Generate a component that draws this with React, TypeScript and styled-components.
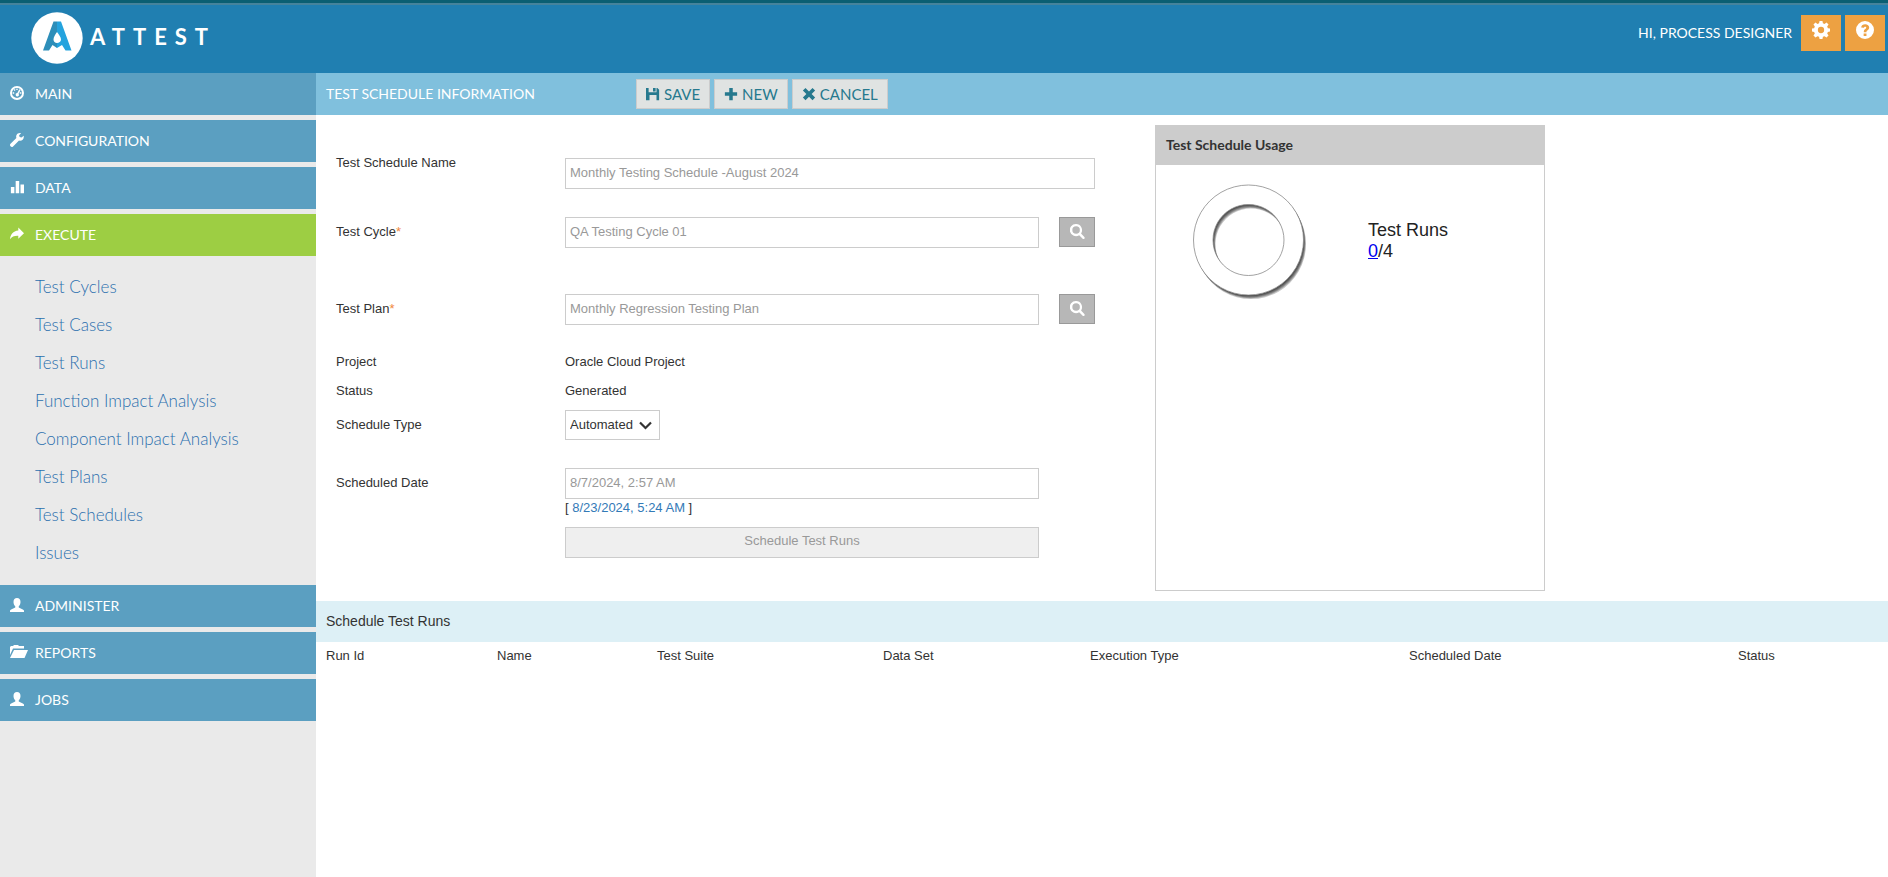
import React from "react";
import styled, { createGlobalStyle } from "styled-components";

const brandFont = `Lato, "Open Sans", sans-serif`;
const bodyFont = `"Liberation Sans", Arial, sans-serif`;

const Global = createGlobalStyle`
  *, *::before, *::after { box-sizing: border-box; }
  body { margin: 0; background: #fff; color: #333; font: 13px/18px ${bodyFont}; }
  button, input, select { font: inherit; margin: 0; border-radius: 0; }
  a { text-decoration: none; }
`;

const Page = styled.div`
  display: flex;
  flex-direction: column;
  min-height: 100vh;
`;

const Header = styled.header`
  display: flex;
  align-items: flex-start;
  justify-content: space-between;
  height: 73px;
  padding: 7px 3px 0 31px;
  background: #207fb1;
  border-top: 3px solid #0a5f73;
  box-shadow: inset 0 2px 0 #45839c;
`;

const Brand = styled.a`
  display: flex;
  align-items: flex-start;
  gap: 7px;
  padding-top: 2px;
  color: #fff;
  font: 700 22px/50px ${brandFont};
  letter-spacing: 8px;
`;

const UserArea = styled.div`
  display: flex;
  gap: 4px;
  padding-top: 5px;
`;

const Greeting = styled.span`
  margin-right: 5px;
  color: #fff;
  font: 14px/35px ${brandFont};
`;

const IconButton = styled.button`
  display: flex;
  justify-content: center;
  align-items: flex-start;
  width: 40px;
  height: 36px;
  padding: 6px 0 0;
  border: 0;
  background: #eda142;
  color: #fff;
`;

const Columns = styled.div`
  display: flex;
  flex: 1;
`;

const Sidebar = styled.nav`
  flex: 0 0 316px;
  display: flex;
  flex-direction: column;
  gap: 5px;
  background: #eaeaea;
`;

const SectionLink = styled.a<{ $active?: boolean }>`
  display: flex;
  align-items: center;
  gap: 7px;
  height: 42px;
  padding: 0 10px;
  background: ${(p) => (p.$active ? "#9dce43" : "#5b9fc1")};
  color: #fff;
  font: 14px/42px ${brandFont};
  svg { flex: none; }
`;

const IconSlot = styled.span`
  display: flex;
  width: 18px;
  padding-bottom: 2px;
`;

const SubMenu = styled.ul`
  margin: 0;
  padding: 7px 0 8px;
  list-style: none;
`;

const SubLink = styled.a`
  display: block;
  padding-left: 35px;
  color: #2a6fae;
  font: 300 17px/38px ${brandFont};
`;

const Main = styled.main`
  flex: 1;
  min-width: 0;
`;

const TitleBar = styled.div`
  display: flex;
  align-items: center;
  height: 42px;
  padding-left: 10px;
  background: #80c0dd;
`;

const Title = styled.h1`
  flex: 0 1 310px;
  margin: 0;
  color: #fff;
  font: 14px/42px ${brandFont};
`;

const Toolbar = styled.div`
  display: flex;
  gap: 4px;
`;

const ToolButton = styled.button`
  display: flex;
  align-items: center;
  gap: 4px;
  height: 30px;
  padding: 0 9px;
  border: 1px solid #ccc;
  background: #e0e3e2;
  color: #26798e;
  && { font: 15px/28px ${brandFont}; }
`;

const Content = styled.div`
  display: grid;
  grid-template-columns: 839fr 390fr 343fr;
  padding: 10px 0;
`;

const Form = styled.form`
  display: grid;
  grid-template-columns: 229fr 474fr 56fr;
  align-content: start;
  margin: 0;
  padding: 29px 60px 0 20px;
`;

const Row = styled.div<{ $height: number }>`
  display: grid;
  grid-column: 1 / -1;
  grid-template-columns: subgrid;
  align-items: start;
  height: ${(p) => p.$height}px;
`;

const Label = styled.label<{ $top?: number }>`
  padding-top: ${(p) => p.$top ?? 6}px;
`;

const Required = styled.span`
  color: #f0883e;
`;

const Input = styled.input<{ $wide?: boolean }>`
  grid-column: ${(p) => (p.$wide ? "2 / 4" : "2")};
  width: 100%;
  height: 31px;
  margin-top: ${(p) => (p.$wide ? 4 : 0)}px;
  padding: 0 4px 3px;
  border: 1px solid #ccc;
  background: #fff;
  color: #999;
`;

const SearchButton = styled.button`
  justify-self: end;
  display: flex;
  justify-content: center;
  width: 36px;
  height: 30px;
  padding: 6px 0 0;
  border: 1px solid #999;
  background: #b7b7b7;
  color: #fff;
`;

const SelectWrap = styled.div`
  position: relative;
  justify-self: start;
  svg { position: absolute; right: 8px; top: 11px; pointer-events: none; }
`;

const Select = styled.select`
  appearance: none;
  display: block;
  width: 95px;
  height: 30px;
  padding: 0 4px;
  border: 1px solid #ccc;
  background: #fff;
  color: #333;
`;

const DateLink = styled.a`
  color: #337ab7;
`;

const ScheduleButton = styled.button`
  grid-column: 2;
  height: 31px;
  padding: 0 0 3px;
  border: 1px solid #ccc;
  background: #efefef;
  color: #999;
`;

const Usage = styled.section`
  height: 466px;
  border: 1px solid #ccc;
`;

const UsageTitle = styled.h2`
  margin: 0;
  padding-left: 10px;
  background: #ccc;
  font: 700 14px/38px ${brandFont};
  border-bottom: 1px solid #ccc;
`;

const UsageBody = styled.div`
  display: flex;
  gap: 60px;
  padding: 14px 32px;
`;

const UsageText = styled.div`
  padding-top: 41px;
  color: #222;
  font-size: 18px;
  line-height: 21px;
  a { color: #00e; text-decoration: underline; }
`;

const RunsTitle = styled.h2`
  margin: 0;
  padding-left: 10px;
  background: #ddf0f6;
  font: 14px/41px ${bodyFont};
`;

const RunsTable = styled.table`
  width: 100%;
  table-layout: fixed;
  border-collapse: collapse;
  th { padding: 5px 0 4px 10px; font-weight: 400; text-align: left; }
`;

const LogoMark = () => (
  <svg width="52" height="52" viewBox="0 0 52 52" aria-hidden="true">
    <circle cx="26" cy="26" r="25.7" fill="#fff" />
    <path d="M22.500 9.500H26V20C24 23 22.500 25 22.500 27.500C22.500 29.500 24 31 26 31V36L21.500 33L18 38.500H12Z" fill="#2d8eb9" />
    <path d="M26 9.500H30L40.500 38.500H34.500L31 33L26 36V31C28 31 30 29.500 30 27.500C30 25 28 23 26 20Z" fill="#24a3de" />
  </svg>
);

const glyphs = {
  dashboard: "M8 0a8 8 0 1 0 0 16A8 8 0 0 0 8 0zm0 2.200a5.800 5.800 0 1 1 0 11.600A5.800 5.800 0 0 1 8 2.200zM7.200 3h1.600v1.700H7.200zM4.200 4.500l1.200-1 1 1.200-1.200 1zM3 7.200h1.800v1.600H3zM11.200 7.200H13v1.600h-1.800zM10.600 3.600l1.500.9-2.300 4.300a1.900 1.900 0 1 1-1.400-.7z",
  wrench: "M15.700 3.200l-2.600 2-2.100-.6-.6-2.100L12.600.3C10.600-.4 8.500.4 7.500 2.200c-.6 1.200-.6 2.300-.2 3.400L.6 12.300c-.8.8-.8 2 0 2.900.9.9 2.100.9 2.900.1l6.800-6.700c2.600.9 6-.9 5.400-5.400z",
  chart: "M1 8h4v7H1zM6.500 1h4v14h-4zM12 5h4v10h-4z",
  share: "M16 7L9.500 .5v3.500C3.500 4.500 .5 8.500 0 14c2-3 5-4.200 9.500-4v3.500z",
  user: "M4 4.500C4 1.700 5.500 0 8 0s4 1.700 4 4.500c0 2-.8 4-2 5v1.300c2 1.200 5.500 1.900 6 3.500V16H0v-1.700c.5-1.600 4-2.300 6-3.500V9.500c-1.200-1-2-3-2-5z",
  save: "M0 1h3v5h9V1h1l2 2v12h-3V9H4v6H0zM8 1h3v4H8z",
  plus: "M6 1h4v5h5v4h-5v5H6v-5H1V6h5z",
  remove: "M4 1l4 4 4-4 3 3-4 4 4 4-3 3-4-4-4 4-3-3 4-4-4-4z",
  search: "M6.500 0a6.500 6.500 0 1 0 3.300 12l3.700 3.700c.6.500 1.300.4 1.800-.1s.5-1.300 0-1.800L11.800 10A6.500 6.500 0 0 0 6.500 0zm0 2.500a4 4 0 1 1 0 8 4 4 0 0 1 0-8z",
  gear: "M6.700 0h2.600l.4 2 1.400.6L12.900 1.400l1.800 1.800-1.200 1.700.6 1.500 1.900.3v2.600l-1.900.4-.6 1.400 1.200 1.800-1.800 1.800-1.800-1.200-1.400.6-.4 1.900H6.700l-.4-1.900-1.400-.6-1.800 1.200-1.800-1.800 1.200-1.800-.6-1.400L0 9.300V6.700l1.900-.3.6-1.500-1.200-1.700 1.800-1.800 1.800 1.200L6.300 2zM8 5.200a2.800 2.800 0 1 0 0 5.600 2.800 2.800 0 0 0 0-5.600z",
  help: "M8 0a8 8 0 1 0 0 16A8 8 0 0 0 8 0zm-1.200 11h2.500v2.300H6.800zM4.600 5.800C4.800 3.700 6.200 2.800 8.200 2.800c2.100 0 3.500 1.200 3.500 3 0 1.400-.8 2.100-1.600 2.700-.6.400-.8.700-.8 1.500H6.900c0-1.500.4-2.200 1.400-2.900.6-.4.800-.7.800-1.100 0-.5-.3-.9-.9-.9-.7 0-1 .4-1.100 1z",
};

type GlyphName = keyof typeof glyphs | "folder";

const Glyph = ({ name, size = 14 }: { name: GlyphName; size?: number }) =>
  name === "folder" ? (
    <svg width="18" height="14" viewBox="0 0 18 14" fill="currentColor" aria-hidden="true">
      <path d="M0 10V2l1-1h2l1-1h4l1 1h5v2.500H3L0 10zM4 5h14l-3.500 8H0z" />
    </svg>
  ) : (
    <svg width={size} height={size} viewBox="0 0 16 16" fill="currentColor" fillRule="evenodd" aria-hidden="true">
      <path d={glyphs[name]} />
    </svg>
  );

const ringPath = "M60.5 6a55 55 0 1 0 .01 0zM60.5 25.500a35.500 35.500 0 1 1-.01 0z";

const Ring = () => (
  <svg width="120" height="124" viewBox="0 0 120 124" fillRule="evenodd" role="img" aria-label="Test runs chart">
    {[1, 2, 3, 4, 5].map((step) => (
      <path key={step} d={ringPath} fill="#000" fillOpacity="0.22" transform={`translate(${step * 0.5} ${step * 0.8})`} />
    ))}
    <path d={ringPath} fill="#fff" stroke="#8a8a8a" strokeWidth="0.8" />
  </svg>
);

const before: [string, GlyphName][] = [["MAIN", "dashboard"], ["CONFIGURATION", "wrench"], ["DATA", "chart"]];
const after: [string, GlyphName][] = [["ADMINISTER", "user"], ["REPORTS", "folder"], ["JOBS", "user"]];
const executeLinks = [
  "Test Cycles", "Test Cases", "Test Runs", "Function Impact Analysis",
  "Component Impact Analysis", "Test Plans", "Test Schedules", "Issues",
];
const runColumns: [string, number][] = [
  ["Run Id", 171], ["Name", 160], ["Test Suite", 226], ["Data Set", 207],
  ["Execution Type", 319], ["Scheduled Date", 329], ["Status", 160],
];
const runColumnsTotal = runColumns.reduce((sum, [, w]) => sum + w, 0);

const Section = ({ label, icon, active }: { label: string; icon: GlyphName; active?: boolean }) => (
  <SectionLink href="#" $active={active}>
    <IconSlot><Glyph name={icon} /></IconSlot>
    {label}
  </SectionLink>
);

export default function App() {
  return (
    <Page>
      <Global />
      <Header>
        <Brand href="#">
          <LogoMark />
          <span>ATTEST</span>
        </Brand>
        <UserArea>
          <Greeting>HI, PROCESS DESIGNER</Greeting>
          <IconButton aria-label="Settings"><Glyph name="gear" size={18} /></IconButton>
          <IconButton aria-label="Help"><Glyph name="help" size={18} /></IconButton>
        </UserArea>
      </Header>
      <Columns>
        <Sidebar>
          {before.map(([label, icon]) => <Section key={label} label={label} icon={icon} />)}
          <Section label="EXECUTE" icon="share" active />
          <SubMenu>
            {executeLinks.map((label) => <li key={label}><SubLink href="#">{label}</SubLink></li>)}
          </SubMenu>
          {after.map(([label, icon]) => <Section key={label} label={label} icon={icon} />)}
        </Sidebar>
        <Main>
          <TitleBar>
            <Title>TEST SCHEDULE INFORMATION</Title>
            <Toolbar>
              <ToolButton><Glyph name="save" />SAVE</ToolButton>
              <ToolButton><Glyph name="plus" />NEW</ToolButton>
              <ToolButton><Glyph name="remove" />CANCEL</ToolButton>
            </Toolbar>
          </TitleBar>
          <Content>
            <Form onSubmit={(e) => e.preventDefault()}>
              <Row $height={63}>
                <Label htmlFor="name" $top={0}>Test Schedule Name</Label>
                <Input id="name" $wide readOnly value="Monthly Testing Schedule -August 2024" />
              </Row>
              <Row $height={77}>
                <Label htmlFor="cycle">Test Cycle<Required>*</Required></Label>
                <Input id="cycle" readOnly value="QA Testing Cycle 01" />
                <SearchButton type="button" aria-label="Find test cycle"><Glyph name="search" size={15} /></SearchButton>
              </Row>
              <Row $height={59}>
                <Label htmlFor="plan">Test Plan<Required>*</Required></Label>
                <Input id="plan" readOnly value="Monthly Regression Testing Plan" />
                <SearchButton type="button" aria-label="Find test plan"><Glyph name="search" size={15} /></SearchButton>
              </Row>
              <Row $height={29}><span>Project</span><span>Oracle Cloud Project</span></Row>
              <Row $height={28}><span>Status</span><span>Generated</span></Row>
              <Row $height={58}>
                <Label htmlFor="type">Schedule Type</Label>
                <SelectWrap>
                  <Select id="type" defaultValue="Automated"><option>Automated</option></Select>
                  <svg width="13" height="9" viewBox="0 0 13 9" fill="none" stroke="#333" strokeWidth="2.200" aria-hidden="true">
                    <path d="M1 1.500L6.500 7L12 1.500" />
                  </svg>
                </SelectWrap>
              </Row>
              <Row $height={31}>
                <Label htmlFor="date">Scheduled Date</Label>
                <Input id="date" readOnly value="8/7/2024, 2:57 AM" />
              </Row>
              <Row $height={28}>
                <span />
                <span>[ <DateLink href="#">8/23/2024, 5:24 AM</DateLink> ]</span>
              </Row>
              <ScheduleButton type="button">Schedule Test Runs</ScheduleButton>
            </Form>
            <Usage>
              <UsageTitle>Test Schedule Usage</UsageTitle>
              <UsageBody>
                <Ring />
                <UsageText>Test Runs<br /><a href="#">0</a>/4</UsageText>
              </UsageBody>
            </Usage>
          </Content>
          <RunsTitle>Schedule Test Runs</RunsTitle>
          <RunsTable>
            <colgroup>
              {runColumns.map(([label, w]) => <col key={label} style={{ width: `${(w / runColumnsTotal) * 100}%` }} />)}
            </colgroup>
            <thead>
              <tr>{runColumns.map(([label]) => <th key={label} scope="col">{label}</th>)}</tr>
            </thead>
          </RunsTable>
        </Main>
      </Columns>
    </Page>
  );
}
